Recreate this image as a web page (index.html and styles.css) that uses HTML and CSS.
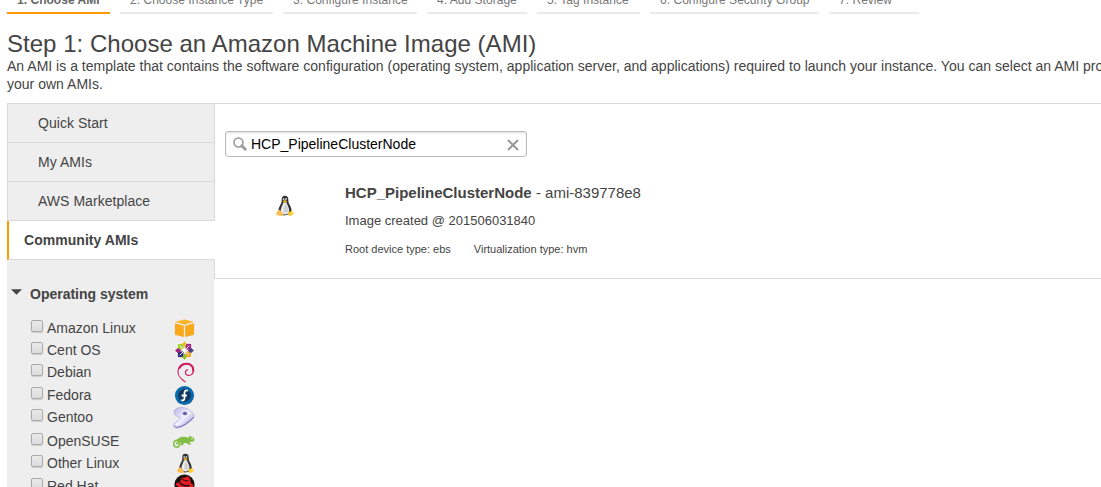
FILE: index.html
```html
<!DOCTYPE html>
<html lang="en">
<head>
<meta charset="utf-8">
<title>Choose an Amazon Machine Image</title>
<link rel="stylesheet" href="styles.css">
</head>
<body>
<svg class="defs" aria-hidden="true">
  <defs>
    <symbol id="tux" viewBox="0 0 20 22">
      <path d="M10 .8c-2.500 0-3.500 1.700-3.300 4 .2 2.500-.5 3.700-1.700 5.800-1 2-1.800 4-1.300 6.200L9 20.500l6.500-1.500c1.500-2 1.300-5-.2-8-1.200-2.200-2.100-3.500-2-6C13.400 2.500 12.500.8 10 .8z" fill="#303234"/>
      <path d="M8.300 7.500c-.4 2.500-2.300 4.500-2.500 7.500 0 2.500 2 4.500 4.400 4.500s4-1.500 4-4c0-3-2.200-5.500-2.600-8z" fill="#ececec"/>
      <path d="M10.200 9c-1 2-1.800 4-1.600 7 .5 2.500 3.500 2.500 4.600 0 .3-2.500-1.300-5-3-7z" fill="#cfd1d3"/>
      <ellipse cx="8.600" cy="4.200" rx=".9" ry="1.100" fill="#ccc"/><ellipse cx="11" cy="4.200" rx=".9" ry="1.100" fill="#ccc"/>
      <path d="M7.600 6.200l2.200-1.300 2.400 1.300-2.300 1.700z" fill="#f5b41c"/>
      <path d="M4.500 14.800c1.500.7 2.500 2.500 3.700 4 .5 2-1 2.600-2.500 2.200L1.700 20c-.8-1 .1-1.700 0-3.300z" fill="#fdbd55"/>
      <path d="M13.500 16.300c1 1 2.200.5 3-.8l2.500 3.300-3.800 2.200c-2 .3-2.500-1.500-1.700-4.700z" fill="#fdcc30"/>
    </symbol>
  </defs>
</svg>
<nav class="steps">
  <span class="step current w1">1. Choose AMI</span>
  <span class="step w2">2. Choose Instance Type</span>
  <span class="step w3">3. Configure Instance</span>
  <span class="step w4">4. Add Storage</span>
  <span class="step w5">5. Tag Instance</span>
  <span class="step w6">6. Configure Security Group</span>
  <span class="step w7">7. Review</span>
</nav>
<header class="intro">
  <h1>Step 1: Choose an Amazon Machine Image (AMI)</h1>
  <p>An AMI is a template that contains the software configuration (operating system, application server, and applications) required to launch your instance. You can select an AMI provided<br>your own AMIs.</p>
</header>
<div class="layout">
  <aside class="sidebar">
    <ul class="tabs">
      <li>Quick Start</li>
      <li>My AMIs</li>
      <li>AWS Marketplace</li>
      <li class="selected">Community AMIs</li>
    </ul>
    <section class="filters">
      <h2><svg class="caret" viewBox="0 0 12 6"><path d="M0 0h12L6 6z" fill="#444"/></svg>Operating system</h2>
      <label class="os"><input type="checkbox"><span>Amazon Linux</span>
        <svg viewBox="0 0 22 22"><path d="M1 4l10-2.500L21 4l-10 3z" fill="#fdb52a"/><path d="M1 5.500l9.300 2.700V20L1 17.500z" fill="#faa91a"/><path d="M21 5.500l-9.300 2.700V20L21 17.500z" fill="#faa91a"/></svg></label>
      <label class="os"><input type="checkbox"><span>Cent OS</span>
        <svg viewBox="0 0 22 22"><path d="M3 3h16v16H3z" fill="#fff"/><path d="M11 .5L15 4l-4 4-4-4zM11 21.500l4-3.500-4-4-4 4zM.5 11L4 7l4 4-4 4zM21.500 11L18 7l-4 4 4 4z" fill="#fff"/><path d="M4 4h6v6H4z" fill="#a4d02a"/><path d="M12 4h6v6h-6z" fill="#a32480"/><path d="M4 12h6v6H4z" fill="#302878"/><path d="M12 12h6v6h-6z" fill="#f3a52b"/><path d="M11 1l2.500 3-2.500 4-2.500-4z" fill="#efb73c"/><path d="M21 11l-3 2.500-4-2.500 4-2.500z" fill="#4b3f8c"/><path d="M11 21l2.500-3-2.500-4-2.500 4z" fill="#8fbd2f"/><path d="M1 11l3-2.500L8 11l-4 2.500z" fill="#a32480"/><path d="M6 6l10 10M16 6L6 16" stroke="#fff" stroke-width="1"/></svg></label>
      <label class="os"><input type="checkbox"><span>Debian</span>
        <svg viewBox="0 0 22 22"><path d="M12 21C7 18 3 13 4.500 8 6 2.500 12 0 17 2.500c4 2 5 8 1.500 10.500-2.500 2-6.500 1-6.500-2 0-1.700 1-2.700 2.500-3" fill="none" stroke="#d1185a" stroke-width="1.200"/><path d="M5.500 7C7.500 2 13 .8 17 3c2.400 1.500 3.400 4.500 2.600 7" fill="none" stroke="#d1185a" stroke-width="1.800"/></svg></label>
      <label class="os tall"><input type="checkbox"><span>Fedora</span>
        <svg viewBox="0 0 22 22"><circle cx="11" cy="11" r="10" fill="#0869ab"/><circle cx="11" cy="11" r="6.700" fill="#123761"/><path d="M14.500 6.200c-2.500-1.200-3.500 0-3.500 2.300v5c0 2.600-1.500 3-3.500 2.200M8 11h5.500" fill="none" stroke="#fff" stroke-width="1.900"/></svg></label>
      <label class="os"><input type="checkbox"><span>Gentoo</span>
        <svg class="wide" viewBox="0 0 22 22"><defs><linearGradient id="gentoo" x1="0" y1="0" x2="1" y2="1"><stop offset="0" stop-color="#b9b5e8"/><stop offset=".5" stop-color="#f2f0ff"/><stop offset="1" stop-color="#8a84c8"/></linearGradient></defs><path d="M1 5.500C1 2 5 .3 9.500.6c6 .5 11 5 11.500 8.900C20 13.500 10 20.500 4 21.300c-3 .2-4-2-3-4C2 15 5 14 7.500 11 5 9.500 1 8.500 1 5.500z" fill="url(#gentoo)" stroke="#a9a5d8" stroke-width=".7"/><path d="M1.500 18.500C3 22.500 12 19 21 10" fill="none" stroke="#716ab5" stroke-width="1"/><ellipse cx="12" cy="6.500" rx="2.200" ry="1.700" fill="#6962a8"/></svg></label>
      <label class="os taller"><input type="checkbox"><span>OpenSUSE</span>
        <svg class="wide" viewBox="0 0 22 22"><path d="M3 9.500C6 5.500 11 4.500 15.500 7l.7-2.200L21 7l.6 2.200-2 1.600-3.300.3 2 2.400h-3l-2-1.700-3 .5v2H7.500v-2.500H5" fill="#80bd42"/><path d="M6 9.500c-3-1-5.500.5-5.500 3.500 0 3.300 4.800 4.300 5.800 1.500.7-2-2.300-3-3.300-1.300" fill="none" stroke="#80bd42" stroke-width="1.500"/><circle cx="19" cy="7.700" r=".8" fill="#eaf5df"/></svg></label>
      <label class="os"><input type="checkbox"><span>Other Linux</span><svg class="penguin"><use href="#tux"/></svg></label>
      <label class="os last"><input type="checkbox"><span>Red Hat</span>
        <svg viewBox="0 0 22 22"><circle cx="11" cy="11" r="10.500" fill="#17110f"/><path d="M2 11c0-2 2-2 4-2l2-5c1-1 2 0 3 0s2-2 4-1c2 .5 2 5 3 7 3 1 3 4 0 5-5 2-15-1-16-4z" fill="#e51b24"/><path d="M6 9c2 3 7 4 10 3" stroke="#17110f" stroke-width="1.500" fill="none"/><path d="M8 5l3 2h4" stroke="#17110f" fill="none"/></svg></label>
    </section>
  </aside>
  <main class="results">
    <div class="search">
      <svg class="lens" viewBox="0 0 14 14"><circle cx="5.500" cy="5.500" r="4.500" fill="none" stroke="#999" stroke-width="1.600"/><path d="M8.800 8.800l3.500 3.500" stroke="#999" stroke-width="2.700" stroke-linecap="round"/></svg>
      <span>HCP_PipelineClusterNode</span>
      <svg class="clear" viewBox="0 0 12 12"><path d="M1 1l10 10M11 1L1 11" stroke="#999" stroke-width="2"/></svg>
    </div>
    <article class="ami">
      <svg class="logo"><use href="#tux"/></svg>
      <div>
        <h3><b>HCP_PipelineClusterNode</b> - ami-839778e8</h3>
        <p class="desc">Image created @ 201506031840</p>
        <p class="meta"><span>Root device type: ebs</span><span>Virtualization type: hvm</span></p>
      </div>
    </article>
  </main>
</div>
</body>
</html>
```
FILE: styles.css
```css
* { box-sizing: border-box; }
html, body { height: 487px; overflow: hidden; }
body {
  margin: 0;
  padding-left: 7px;
  background: #fff;
  color: #444;
  font: 14px/18px "Liberation Sans", Arial, sans-serif;
}
h1, h2, h3, p, ul { margin: 0; padding: 0; }
svg { display: block; flex: none; }
.defs { position: absolute; width: 0; height: 0; }

.steps { display: flex; gap: 10px; height: 14px; align-items: flex-end; }
.step {
  flex: none;
  height: 22px;
  padding-left: 10px;
  border-bottom: 2px solid #eaeaea;
  color: #777;
  font-size: 12px;
  letter-spacing: .03px;
  line-height: 16px;
  white-space: nowrap;
}
.current { border-color: #f90; color: #666; font-weight: bold; }
.w1 { width: 103px; }
.w2 { width: 153px; }
.w3 { width: 134px; }
.w4 { width: 100px; }
.w5 { width: 103px; }
.w6 { width: 169px; }
.w7 { width: 90px; }

.intro { height: 89px; padding-top: 16px; white-space: nowrap; }
.intro h1 { font-size: 24px; font-weight: normal; line-height: 27px; letter-spacing: .025px; }
.intro p { letter-spacing: .012px; }

.layout { display: flex; height: 384px; align-items: flex-start; }
.sidebar { flex: none; width: 208px; }
.tabs { list-style: none; border-top: 1px solid #d9d9d9; }
.tabs li {
  height: 39px;
  padding-left: 30px;
  border: solid #d9d9d9;
  border-width: 0 1px 1px;
  background: #eee;
  line-height: 38px;
  letter-spacing: .04px;
}
.tabs .selected {
  position: relative;
  padding-left: 15px;
  border-left: 2px solid #f90;
  border-right-color: #fff;
  background: #fff;
  font-weight: bold;
}
.filters { width: 207px; height: 227px; padding-top: 25px; background: #eee; overflow: hidden; }
.filters h2 {
  display: flex;
  height: 32px;
  padding-left: 4px;
  gap: 8px;
  font-size: 14px;
  line-height: 18px;
}
.caret { width: 11px; height: 6px; margin-top: 4px; }
.os { display: flex; height: 22px; padding-left: 24px; }
.os.tall { height: 23px; padding-top: 1px; }
.os.taller { height: 24px; padding-top: 2px; }
.os.last { height: 23px; padding-top: 1px; }
.os input {
  flex: none;
  appearance: none;
  width: 12px;
  height: 12px;
  margin: 3px 4px 0 0;
  border: 1px solid #aaa;
  border-radius: 2px;
  background: linear-gradient(#eaeaea, #dcdcdc);
  box-shadow: 0 1px 1px #ccc;
}
.os span { width: 126px; line-height: 22px; }
.os svg { width: 21px; height: 21px; margin: 1px 0 0 1px; }
.os .wide { width: 22px; height: 22px; margin-left: 0; }
.os .penguin { margin-left: 2px; }
.os.last svg { margin-top: -1px; }

.results {
  flex: 1;
  height: 176px;
  margin-left: -1px;
  padding: 27px 0 0 10px;
  border: solid #d9d9d9;
  border-width: 1px 0 1px 1px;
  min-width: 0;
}
.search {
  display: flex;
  align-items: center;
  width: 302px;
  height: 26px;
  padding: 0 7px;
  border: 1px solid #bbb;
  border-radius: 3px;
  box-shadow: inset 0 1px 2px #ddd;
  color: #000;
}
.search span { flex: 1; padding-left: 4px; }
.lens { width: 14px; height: 14px; }
.clear { width: 12px; height: 12px; margin-top: 1px; }
.ami { display: flex; padding: 27px 0 0 50px; }
.logo { width: 20px; height: 22px; margin: 11px 50px 0 0; }
.ami h3 { font-size: 15px; font-weight: normal; line-height: 18px; }
.desc { margin-top: 10px; font-size: 13px; line-height: 18px; }
.meta { display: flex; gap: 23px; margin-top: 11px; font-size: 11px; line-height: 16px; }
```
